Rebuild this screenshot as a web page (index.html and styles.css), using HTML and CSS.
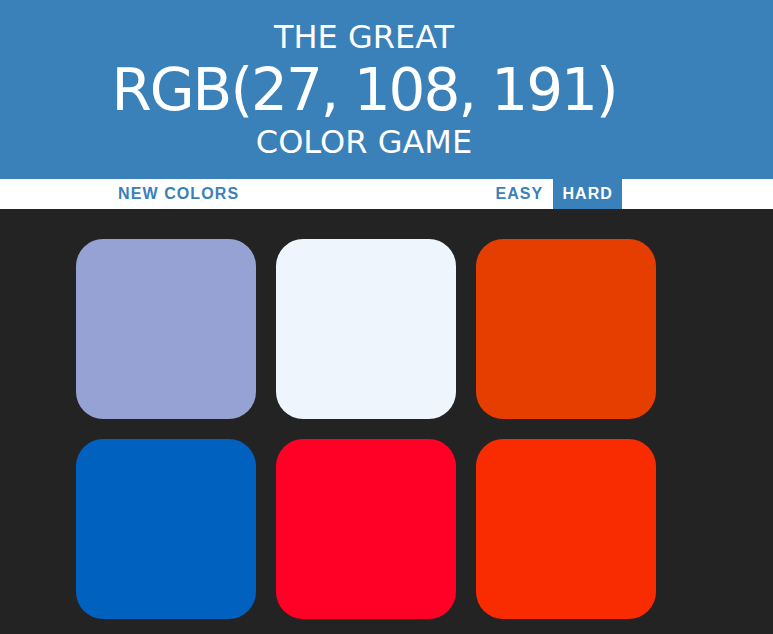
FILE: index.html
```html
<!DOCTYPE html>
<html>
<head>
<meta charset="utf-8">
<link rel="stylesheet" href="styles.css">
</head>
<body>
<header class="header">
  <h1 class="title">
    <span class="title-line">The Great</span>
    <span class="title-rgb">RGB(27, 108, 191)</span>
    <span class="title-line">Color Game</span>
  </h1>
</header>
<nav class="stripe">
  <div class="stripe-inner">
    <button class="btn btn-reset">New Colors</button>
    <div class="modes">
      <button class="btn">Easy</button>
      <button class="btn btn-selected">Hard</button>
    </div>
  </div>
</nav>
<main class="board">
  <div class="square sq1"></div>
  <div class="square sq2"></div>
  <div class="square sq3"></div>
  <div class="square sq4"></div>
  <div class="square sq5"></div>
  <div class="square sq6"></div>
</main>
</body>
</html>
```
FILE: styles.css
```css
html, body {
  margin: 0;
  padding: 0;
}
body {
  background: #232323;
  font-family: "DejaVu Sans", sans-serif;
  width: 773px;
  height: 634px;
  overflow: hidden;
}
.header {
  background: #3a80b9;
  height: 179px;
}
.title {
  margin: 0;
  width: 728px;
  padding-top: 20px;
  display: flex;
  flex-direction: column;
  align-items: center;
  color: #fff;
  font-weight: normal;
  text-transform: uppercase;
  line-height: 1.1;
}
.title-line {
  font-size: 32px;
  height: 35px;
  line-height: 35px;
}
.title-rgb {
  font-size: 58px;
  letter-spacing: -2px;
  height: 70px;
  line-height: 70px;
}
.stripe {
  background: #fff;
  height: 30px;
}
.stripe-inner {
  width: 732px;
  height: 30px;
  display: flex;
  align-items: stretch;
}
.btn {
  border: none;
  background: none;
  margin: 0;
  padding: 0 9px;
  font-family: "Liberation Sans", Arial, sans-serif;
  font-weight: bold;
  font-size: 16px;
  letter-spacing: 1.1px;
  text-transform: uppercase;
  color: #3a80b9;
  height: 30px;
}
.btn-reset {
  margin-left: 109px;
}
.modes {
  margin-left: auto;
  margin-right: 110px;
  display: flex;
  gap: 1px;
}
.btn-selected {
  background: #3a80b9;
  color: #fff;
}
.board {
  width: 600px;
  margin-left: 66px;
  padding-top: 30px;
  display: grid;
  grid-template-columns: repeat(3, 180px);
  gap: 20px;
  padding-left: 10px;
}
.square {
  width: 180px;
  height: 180px;
  border-radius: 27px;
}
.sq1 { background: #95a2d3; }
.sq2 { background: #eef5fc; }
.sq3 { background: #e63e00; }
.sq4 { background: #0061bf; }
.sq5 { background: #ff0027; }
.sq6 { background: #f82c00; }
```
